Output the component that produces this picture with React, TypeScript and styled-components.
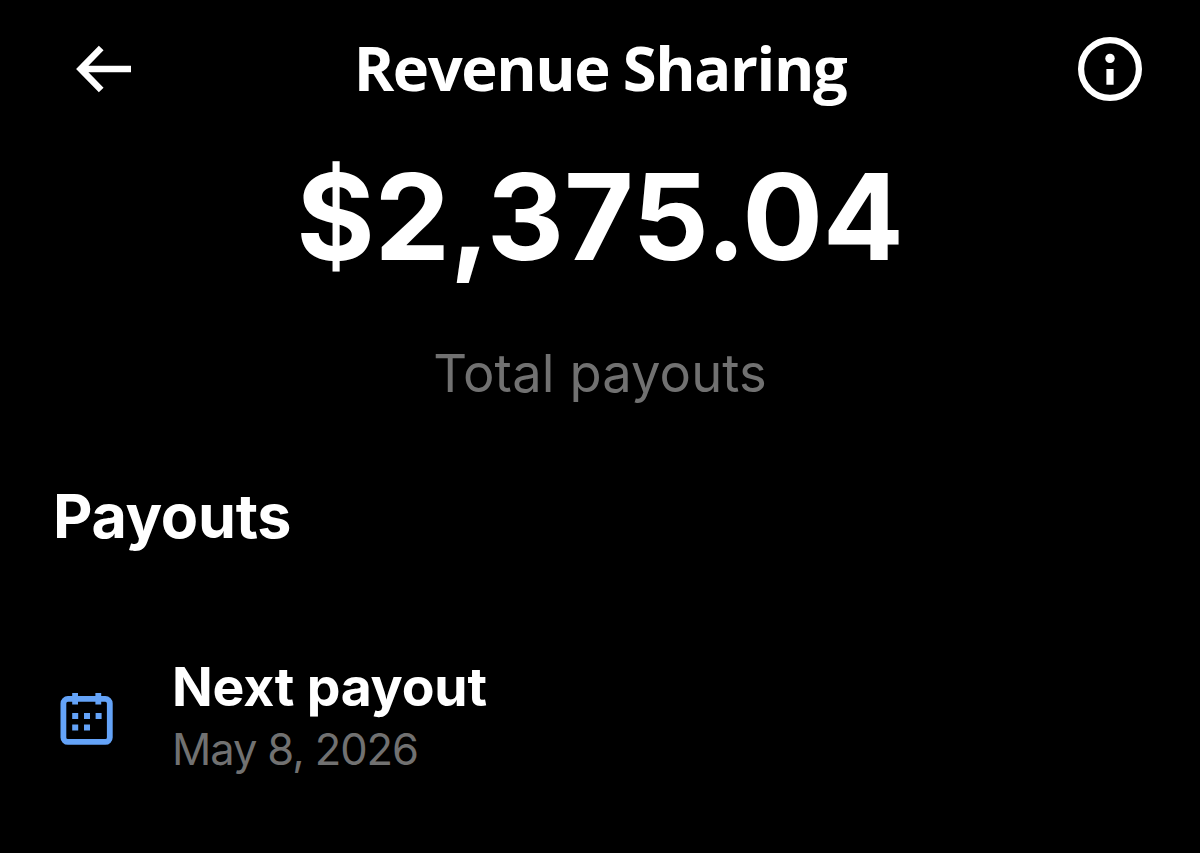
import React from "react";
import styled, { createGlobalStyle } from "styled-components";

const GlobalStyle = createGlobalStyle`
  * {
    box-sizing: border-box;
  }

  body {
    margin: 0;
    background: #000;
    color: #fff;
    font-family: Inter, "Liberation Sans", sans-serif;
  }
`;

const Screen = styled.main`
  display: flex;
  flex-direction: column;
  height: 853px;
  overflow: hidden;
  background: #000;
`;

const Header = styled.header`
  display: grid;
  grid-template-columns: 150px 1fr 150px;
  align-items: center;
  height: 138px;
`;

const IconButton = styled.button<{ $side: "left" | "right" }>`
  display: flex;
  justify-content: ${({ $side }) => ($side === "left" ? "flex-start" : "flex-end")};
  padding: 0 ${({ $side }) => ($side === "left" ? "0 0 76px" : "58px 0 0")};
  border: 0;
  background: none;
  color: #fff;
`;

const Title = styled.h1`
  margin: -5px 0 0;
  text-align: center;
  white-space: nowrap;
  font-family: "Open Sans", sans-serif;
  font-size: 61.5px;
  font-weight: 700;
  line-height: 80px;
  letter-spacing: -1.4px;
  word-spacing: -1px;
`;

const Summary = styled.section`
  display: flex;
  flex-direction: column;
  align-items: center;
`;

const Amount = styled.div`
  margin-top: -1px;
  font-size: 120px;
  font-weight: 700;
  line-height: 160px;
  letter-spacing: -0.3px;
`;

const AmountLabel = styled.div`
  margin-top: 41px;
  color: #717171;
  font-size: 52.5px;
  line-height: 70px;
  letter-spacing: 0.1px;
`;

const Section = styled.section`
  padding: 68px 54px 0 53px;
`;

const SectionTitle = styled.h2`
  margin: 0;
  font-size: 61px;
  font-weight: 700;
  line-height: 80px;
  letter-spacing: -0.3px;
`;

const Row = styled.div`
  display: flex;
  align-items: center;
  margin-top: 97px;
`;

const RowText = styled.div`
  margin-left: 59px;
`;

const RowTitle = styled.div`
  font-size: 53.5px;
  font-weight: 700;
  line-height: 68px;
  letter-spacing: -0.2px;
`;

const RowDate = styled.div`
  color: #717171;
  font-size: 43.5px;
  line-height: 56px;
  letter-spacing: -1.1px;
`;

const ArrowIcon = () => (
  <svg width="56" height="48" viewBox="0 0 56 48" fill="none" stroke="currentColor" strokeWidth="6.6">
    <path d="M55 24H6M25.2 3L4.7 24l20.5 21" />
  </svg>
);

const InfoIcon = () => (
  <svg width="64" height="64" viewBox="0 0 64 64">
    <circle cx="32" cy="32" r="28.9" fill="none" stroke="currentColor" strokeWidth="6.2" />
    <circle cx="32" cy="21.4" r="4.7" fill="currentColor" />
    <path d="M28.4 32h7.2v15.8h-7.2z" fill="currentColor" />
  </svg>
);

const CalendarIcon = () => (
  <svg width="60" height="60" viewBox="0 0 60 60" fill="#64a3f8">
    <rect x="10.4" y="13.9" width="46.4" height="43" rx="4.5" fill="none" stroke="#64a3f8" strokeWidth="5.8" />
    <path d="M19.2 8H25v11.6h-5.8zM42.4 8h5.8v11.6h-5.8z" />
    <path d="M19.2 28h6v6h-6zM31 28h6v6h-6zM42.6 28h6v6h-6zM19.2 39.4h6v6h-6zM31 39.4h6v6h-6z" />
  </svg>
);

export default function App() {
  return (
    <Screen>
      <GlobalStyle />
      <Header>
        <IconButton type="button" $side="left" aria-label="Back">
          <ArrowIcon />
        </IconButton>
        <Title>Revenue Sharing</Title>
        <IconButton type="button" $side="right" aria-label="Info">
          <InfoIcon />
        </IconButton>
      </Header>
      <Summary>
        <Amount>$2,375.04</Amount>
        <AmountLabel>Total payouts</AmountLabel>
      </Summary>
      <Section>
        <SectionTitle>Payouts</SectionTitle>
        <Row>
          <CalendarIcon />
          <RowText>
            <RowTitle>Next payout</RowTitle>
            <RowDate>May 8, 2026</RowDate>
          </RowText>
        </Row>
      </Section>
    </Screen>
  );
}
